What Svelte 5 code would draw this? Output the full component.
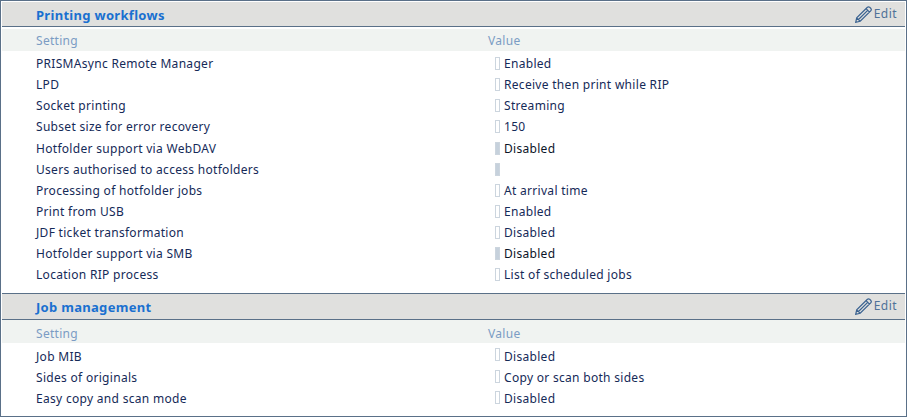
<script>
  const sections = [
    {
      title: "Printing workflows",
      rows: [
        { name: "PRISMAsync Remote Manager", value: "Enabled" },
        { name: "LPD", value: "Receive then print while RIP" },
        { name: "Socket printing", value: "Streaming" },
        { name: "Subset size for error recovery", value: "150" },
        { name: "Hotfolder support via WebDAV", value: "Disabled", locked: true },
        { name: "Users authorised to access hotfolders", value: "", locked: true },
        { name: "Processing of hotfolder jobs", value: "At arrival time" },
        { name: "Print from USB", value: "Enabled" },
        { name: "JDF ticket transformation", value: "Disabled" },
        { name: "Hotfolder support via SMB", value: "Disabled", locked: true },
        { name: "Location RIP process", value: "List of scheduled jobs" },
      ],
    },
    {
      title: "Job management",
      rows: [
        { name: "Job MIB", value: "Disabled" },
        { name: "Sides of originals", value: "Copy or scan both sides" },
        { name: "Easy copy and scan mode", value: "Disabled" },
      ],
    },
  ];
</script>

<div class="page">
  {#each sections as section}
    <section>
      <header>
        <h2>{section.title}</h2>
        <span class="edit">
          <svg width="17" height="17" viewBox="0 0 17 17" aria-hidden="true">
            <path d="M.7 16.3 L1.7 11.8 L12.4 1.2 Q13.5 .4 14.6 1.2 L15.9 2.5 Q16.7 3.6 15.9 4.7 L5.2 15.3 Z M1.7 11.8 L5.2 15.3 M3.5 13.5 L13.2 3.9 M11 2.6 L14.5 6.1" />
          </svg>
          <span>Edit</span>
        </span>
      </header>
      <div class="cols">
        <span>Setting</span>
        <span>Value</span>
      </div>
      {#each section.rows as row}
        <div class="row">
          <span class="name">{row.name}</span>
          <span class="value">
            <i class:locked={row.locked}></i>
            <b class:locked={row.locked}>{row.value}</b>
          </span>
        </div>
      {/each}
    </section>
  {/each}
</div>

<style>
  :global(body) {
    margin: 0;
    background: #fff;
  }

  .page {
    width: 907px;
    height: 417px;
    box-sizing: border-box;
    padding: 1px 1px 0;
    font-family: "Noto Sans", sans-serif;
    font-size: 12px;
    line-height: 17px;
    letter-spacing: 0.3px;
    color: #152a58;
    border: 1px solid #5a7088;
    overflow: hidden;
  }

  section {
    padding-bottom: 7.46px;
    border-bottom: 1px solid #5a7088;
  }

  section:last-child {
    border-bottom: 0;
  }

  header {
    display: flex;
    align-items: center;
    justify-content: space-between;
    box-sizing: border-box;
    height: 25px;
    padding: 2px 8px 0 34px;
    background: #e0e0de;
    border-bottom: 1px solid #5a7088;
  }

  section:last-child header {
    height: 26px;
  }

  section:first-child header {
    margin-bottom: 2px;
  }

  h2 {
    margin: 0;
    font-size: 13px;
    font-weight: bold;
    color: #1a70d0;
  }

  .edit {
    display: flex;
    align-items: center;
    gap: 2px;
    margin-top: -2px;
    color: #4f7299;
  }

  .edit span {
    margin-bottom: 2px;
    letter-spacing: 0.45px;
  }

  .edit svg {
    fill: none;
    stroke: #3a6290;
    stroke-width: 1.2;
  }

  .cols,
  .row {
    display: grid;
    grid-template-columns: 452px 1fr;
    padding-left: 34px;
    align-items: center;
  }

  .cols {
    height: 22px;
    margin-bottom: 2px;
    background: #f0f3f1;
    color: #7b9cc4;
  }

  section:last-child .cols {
    box-sizing: border-box;
    height: 23px;
    padding-top: 4px;
    margin-bottom: 3px;
  }

  .row {
    height: 21.14px;
  }

  .value {
    display: flex;
    align-items: center;
    padding-left: 7px;
  }

  .value i {
    box-sizing: border-box;
    width: 5px;
    height: 13px;
    margin-right: 4px;
    border: 1px solid #ccd5de;
    background: #fff;
  }

  section:last-child .value i {
    margin-bottom: 3px;
  }

  .value i.locked {
    background: #c6d1dc;
  }

  .value b {
    font-weight: normal;
  }

  .value b.locked {
    color: #0b1428;
  }
</style>
